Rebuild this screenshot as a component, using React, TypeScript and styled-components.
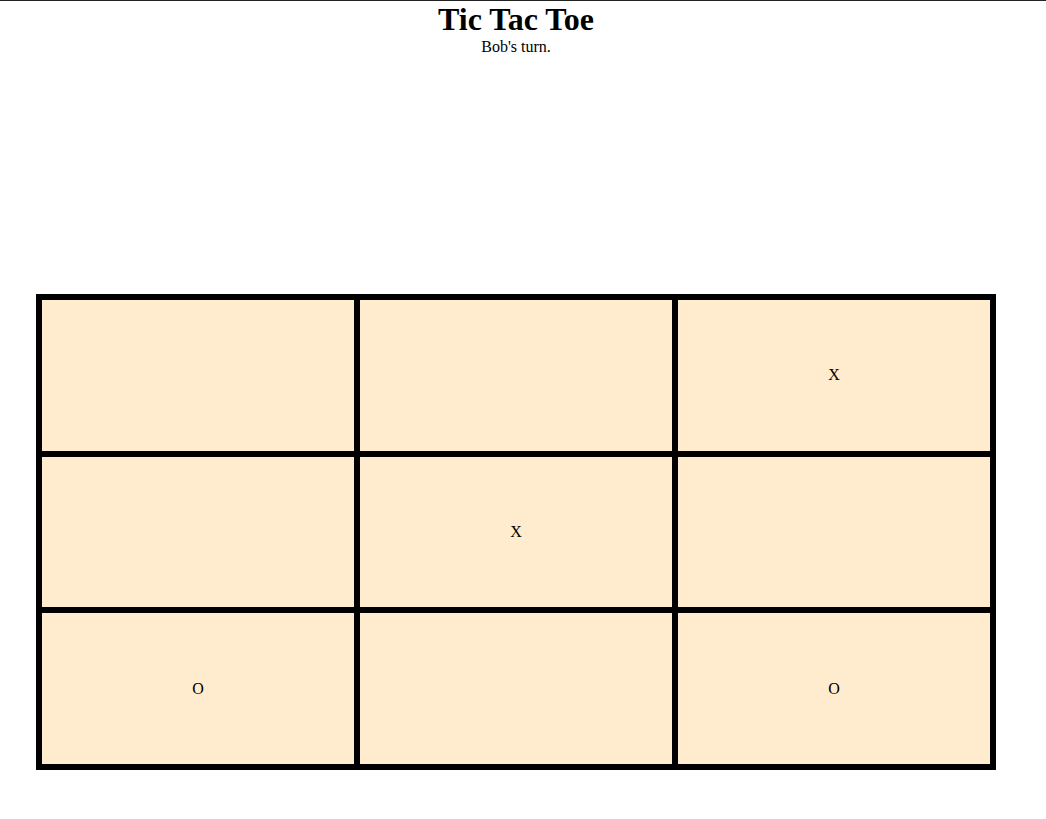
import React from "react";
import styled, { createGlobalStyle } from "styled-components";

const GlobalStyle = createGlobalStyle`
  html, body {
    margin: 0;
    padding: 0;
    background: #ffffff;
  }
  body {
    font-family: "Liberation Serif", "Times New Roman", serif;
    color: #000000;
  }
`;

const Page = styled.div`
  border-top: 1px solid #222222;
  display: flex;
  flex-direction: column;
  padding-left: 36px;
`;

const Container = styled.main`
  width: 960px;
  display: flex;
  flex-direction: column;
  align-items: center;
`;

const Title = styled.h1`
  margin: 0;
  font-size: 32px;
  font-weight: bold;
  line-height: normal;
`;

const Status = styled.p`
  margin: 0;
  font-size: 16px;
  line-height: normal;
`;

const Board = styled.div`
  margin-top: 238px;
  width: 960px;
  height: 476px;
  box-sizing: border-box;
  border: 3px solid #000000;
  display: grid;
  grid-template-columns: repeat(3, 1fr);
  grid-template-rows: repeat(3, 1fr);
`;

const Cell = styled.button`
  appearance: none;
  margin: 0;
  padding: 0;
  box-sizing: border-box;
  border: 3px solid #000000;
  background: #ffebcd;
  font-family: "Liberation Serif", "Times New Roman", serif;
  font-size: 16px;
  color: #000000;
  display: flex;
  align-items: center;
  justify-content: center;
  cursor: pointer;
`;

const cells = ["", "", "X", "", "X", "", "O", "", "O"];

export default function App() {
  return (
    <>
      <GlobalStyle />
      <Page>
        <Container>
          <Title>Tic Tac Toe</Title>
          <Status>Bob's turn.</Status>
          <Board>
            {cells.map((v, i) => (
              <Cell key={i}>{v}</Cell>
            ))}
          </Board>
        </Container>
      </Page>
    </>
  );
}
